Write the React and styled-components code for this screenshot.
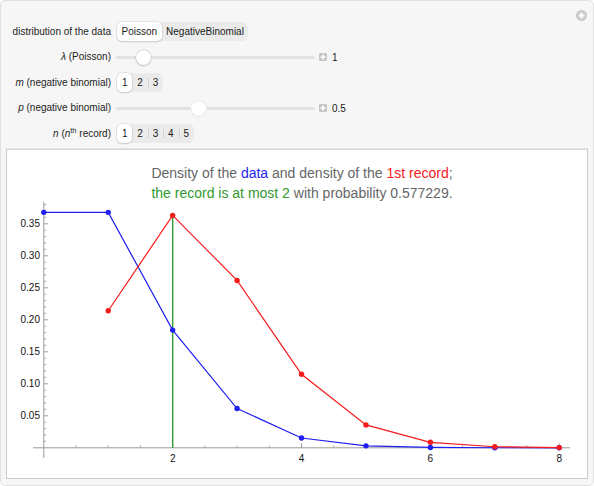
import React from 'react';
import styled, { createGlobalStyle } from 'styled-components';

const Global = createGlobalStyle`
  html, body { margin: 0; padding: 0; background: #ffffff; }
  body { font-family: "Liberation Sans", Arial, sans-serif; }
  #root { width: 594px; height: 486px; }
`;

const Frame = styled.div`
  position: relative;
  box-sizing: border-box;
  width: 594px;
  height: 486px;
  background: #f6f6f6;
  border: 1px solid #e1e1e1;
  border-radius: 5px;
  padding: 18px 5px 0 5px;
  display: flex;
  flex-direction: column;
`;

const CornerButton = styled.div`
  position: absolute;
  top: 9px;
  right: 6px;
  width: 11px;
  height: 11px;
  border-radius: 50%;
  background: #c9c9c9;
  display: flex;
  align-items: center;
  justify-content: center;
`;

const Controls = styled.div`
  display: grid;
  grid-template-columns: 105px auto;
  grid-auto-rows: 25.5px;
  column-gap: 6px;
  align-items: center;
  font-size: 10px;
  color: #1e1e1e;
`;

const Label = styled.div`
  text-align: right;
  white-space: nowrap;
  line-height: 12px;
  i { font-style: italic; }
  sup { font-size: 7.5px; vertical-align: 4px; line-height: 0; }
`;

const ControlCell = styled.div`
  display: flex;
  align-items: center;
`;

const Segmented = styled.div`
  display: inline-flex;
  align-items: center;
  height: 19px;
  background: #ebebeb;
  border-radius: 6px;
  padding: 0;
`;

const Segment = styled.div`
  position: relative;
  box-sizing: border-box;
  height: 19px;
  min-width: ${p => (p.$narrow ? '15.4px' : 'auto')};
  padding: 0 ${p => (p.$narrow ? '0' : '4.5px')};
  display: flex;
  align-items: center;
  justify-content: center;
  border-radius: 5px;
  background: ${p => (p.$active ? '#ffffff' : 'transparent')};
  box-shadow: ${p => (p.$active ? '0 0 0 0.5px #cfcfcf, 0 1px 1.5px rgba(0,0,0,0.18)' : 'none')};
  color: #1a1a1a;
  font-size: 10px;
  &::before {
    content: '';
    display: ${p => (p.$sep ? 'block' : 'none')};
    position: absolute;
    left: 0;
    top: 5px;
    height: 9px;
    width: 1px;
    background: #d2d2d2;
  }
`;

const SliderWrap = styled.div`
  position: relative;
  width: 199px;
  height: 16px;
  margin-left: -1px;
  &::before {
    content: '';
    position: absolute;
    left: 0;
    right: 0;
    top: 6.5px;
    height: 3px;
    border-radius: 2px;
    background: #e3e3e3;
  }
`;

const Thumb = styled.div`
  position: absolute;
  top: 0.5px;
  width: 15px;
  height: 15px;
  border-radius: 50%;
  background: #ffffff;
  box-shadow: ${p => (p.$dim ? '0 0 0 0.5px #e0e0e0, 0 0.5px 1px rgba(0,0,0,0.08)' : '0 0 0 0.5px #c8c8c8, 0 1px 2px rgba(0,0,0,0.22)')};
`;

const PlusBox = styled.div`
  width: 8px;
  height: 8px;
  margin-left: 4px;
  border-radius: 1px;
  background: #c6c6c6;
  display: flex;
  align-items: center;
  justify-content: center;
`;

const Value = styled.span`
  margin-left: 5px;
  font-size: 10px;
  color: #1a1a1a;
`;

const PlotPanel = styled.div`
  box-sizing: border-box;
  margin-top: 2.5px;
  height: 330px;
  background: #ffffff;
  border: 1px solid #cbcbcb;
  border-top-color: #d6d6d6;
  box-shadow: 0 -1px 0 #e4e4e4;
  display: flex;
  flex-direction: column;
`;

const Title = styled.div`
  padding: 13px 0 0 10px;
  text-align: center;
  font-size: 14px;
  line-height: 20px;
  color: #666666;
  white-space: nowrap;
`;

const Colored = styled.span`
  color: ${p => p.$c};
`;

const ChartSvg = styled.svg`
  display: block;
  overflow: visible;
`;

const PlusGlyph = ({ size = 6, w = 1.6 }) => (
  <svg width={size} height={size} viewBox="0 0 6 6">
    <path d="M3 0.5V5.5M0.5 3H5.5" stroke="#ffffff" strokeWidth={w} />
  </svg>
);

const Slider = ({ frac, dim, value }) => (
  <ControlCell>
    <SliderWrap>
      <Thumb $dim={dim} style={{ left: `${frac * 184}px` }} />
    </SliderWrap>
    <PlusBox>
      <PlusGlyph />
    </PlusBox>
    <Value>{value}</Value>
  </ControlCell>
);

const NumberSetter = ({ count, active }) => (
  <Segmented>
    {Array.from({ length: count }, (_, i) => (
      <Segment key={i} $narrow $active={i + 1 === active} $sep={i > 0 && i + 1 !== active && i !== active}>
        {i + 1}
      </Segment>
    ))}
  </Segmented>
);

const X0 = 43.8;
const XS = 64.43;
const Y0 = 447.8;
const YS = 640;
const px = x => X0 + x * XS;
const py = y => Y0 - y * YS;

const blue = [0.36788, 0.36788, 0.18394, 0.061313, 0.015328, 0.0030657, 0.00051094, 0.000072992, 0.000009124];
const red = [null, 0.2141, 0.36313, 0.26149, 0.11487, 0.035813, 0.008605, 0.0016773, 0.000275];

const BLUE = '#1f1ff0';
const RED = '#f51b1b';
const GREEN = '#2f9a2f';
const AXIS = '#9a9a9a';

const Chart = () => {
  const bluePts = blue.map((v, i) => [px(i), py(v)]);
  const redPts = red.map((v, i) => (v == null ? null : [px(i), py(v)])).filter(Boolean);
  const toStr = pts => pts.map(p => p.join(',')).join(' ');

  const xMinor = [];
  for (let k = 1; k <= 16; k++) {
    if (k % 4 !== 0) xMinor.push(k * 0.5);
  }
  const xMajor = [2, 4, 6, 8];
  const yMajor = [0.05, 0.1, 0.15, 0.2, 0.25, 0.3, 0.35];
  const yMinor = [];
  for (let k = 1; k <= 38; k++) {
    if (k % 5 !== 0) yMinor.push(k / 100);
  }

  return (
    <ChartSvg width="580" height="274" viewBox="7 203 580 274">
      <line x1="33" y1={Y0} x2="570" y2={Y0} stroke={AXIS} strokeWidth="1" />
      <line x1={X0} y1="202" x2={X0} y2="458" stroke={AXIS} strokeWidth="1" />
      {xMinor.map(x => (
        <line key={'xm' + x} x1={px(x)} y1={Y0} x2={px(x)} y2={Y0 - 2.5} stroke={AXIS} strokeWidth="0.8" />
      ))}
      {xMajor.map(x => (
        <line key={'xM' + x} x1={px(x)} y1={Y0} x2={px(x)} y2={Y0 - 4.5} stroke={AXIS} strokeWidth="1" />
      ))}
      {yMinor.map(y => (
        <line key={'ym' + y} x1={X0} y1={py(y)} x2={X0 + 2.5} y2={py(y)} stroke={AXIS} strokeWidth="0.8" />
      ))}
      {yMajor.map(y => (
        <line key={'yM' + y} x1={X0} y1={py(y)} x2={X0 + 4.5} y2={py(y)} stroke={AXIS} strokeWidth="1" />
      ))}
      {yMajor.map(y => (
        <text
          key={'yl' + y}
          x="40"
          y={py(y) + 3.6}
          textAnchor="end"
          fontSize="10"
          fontFamily="Liberation Sans, Arial, sans-serif"
          fill="#111"
        >
          {y.toFixed(2)}
        </text>
      ))}
      {xMajor.map(x => (
        <text
          key={'xl' + x}
          x={px(x)}
          y="461.5"
          textAnchor="middle"
          fontSize="10"
          fontFamily="Liberation Sans, Arial, sans-serif"
          fill="#111"
        >
          {x}
        </text>
      ))}
      <line x1={px(2)} y1={Y0} x2={px(2)} y2={py(0.36313)} stroke={GREEN} strokeWidth="1.4" />
      <polyline points={toStr(bluePts)} fill="none" stroke={BLUE} strokeWidth="1.2" />
      {bluePts.map((p, i) => (
        <circle key={'b' + i} cx={p[0]} cy={p[1]} r="2.7" fill={BLUE} />
      ))}
      <polyline points={toStr(redPts)} fill="none" stroke={RED} strokeWidth="1.2" />
      {redPts.map((p, i) => (
        <circle key={'r' + i} cx={p[0]} cy={p[1]} r="2.7" fill={RED} />
      ))}
    </ChartSvg>
  );
};

export default function App() {
  return (
    <>
      <Global />
      <Frame>
        <CornerButton>
          <PlusGlyph size={7} w={1.8} />
        </CornerButton>
        <Controls>
          <Label>distribution of the data</Label>
          <ControlCell>
            <Segmented>
              <Segment $active>Poisson</Segment>
              <Segment>NegativeBinomial</Segment>
            </Segmented>
          </ControlCell>

          <Label>
            <i>λ</i> (Poisson)
          </Label>
          <Slider frac={0.106} value="1" />

          <Label>
            <i>m</i> (negative binomial)
          </Label>
          <ControlCell>
            <NumberSetter count={3} active={1} />
          </ControlCell>

          <Label>
            <i>p</i> (negative binomial)
          </Label>
          <Slider frac={0.41} dim value="0.5" />

          <Label>
            <i>n</i> (<i>n</i>
            <sup>th</sup> record)
          </Label>
          <ControlCell>
            <NumberSetter count={5} active={1} />
          </ControlCell>
        </Controls>
        <PlotPanel>
          <Title>
            <div>
              Density of the <Colored $c={BLUE}>data</Colored> and density of the{' '}
              <Colored $c={RED}>1st record</Colored>;
            </div>
            <div>
              <Colored $c={GREEN}>the record is at most 2</Colored> with probability 0.577229.
            </div>
          </Title>
          <Chart />
        </PlotPanel>
      </Frame>
    </>
  );
}
